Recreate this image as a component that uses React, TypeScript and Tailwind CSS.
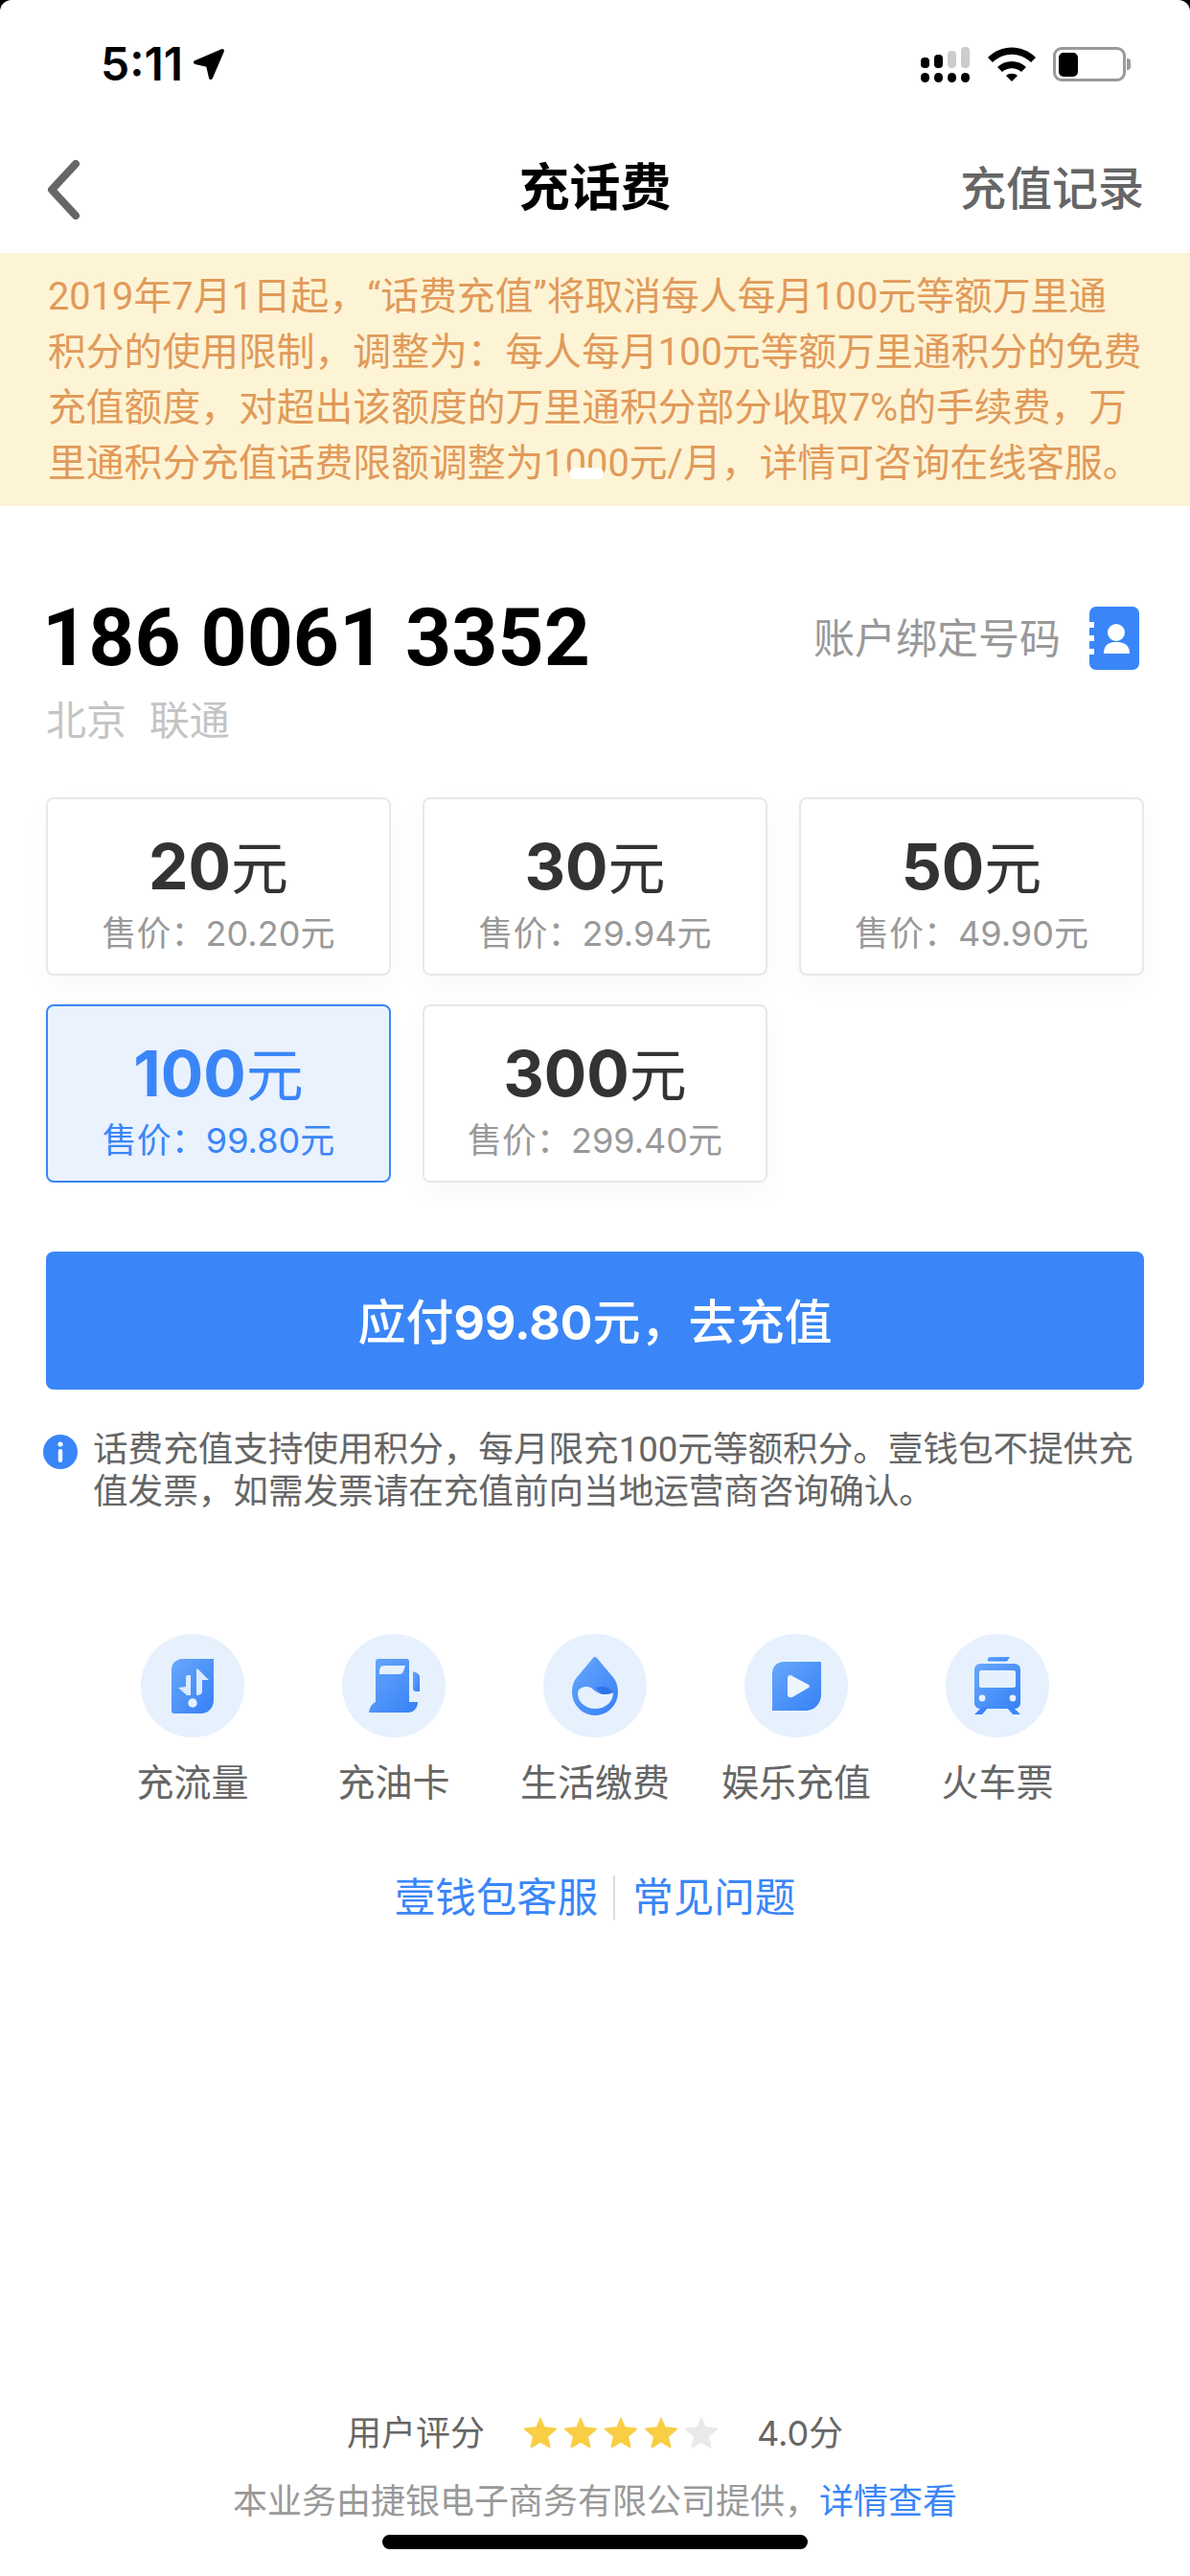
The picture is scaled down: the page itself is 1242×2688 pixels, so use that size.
const CJK = "font-['Inter','Noto_Sans_CJK_SC',sans-serif]";

const PLANS = [
  { face: '20', price: '20.20' },
  { face: '30', price: '29.94' },
  { face: '50', price: '49.90' },
  { face: '100', price: '99.80', active: true },
  { face: '300', price: '299.40' },
];

function IconGradient({ id }: { id: string }) {
  return (
    <defs>
      <linearGradient id={id} x1="0" y1="0" x2="1" y2="1">
        <stop offset="0" stopColor="#68a8fb" />
        <stop offset="1" stopColor="#3580f6" />
      </linearGradient>
    </defs>
  );
}

function SignalIcon() {
  return (
    <svg width="52" height="37" viewBox="0 0 52 37">
      <rect x="0" y="11" width="9" height="11" rx="4" fill="#000" />
      <rect x="14" y="8" width="9" height="14" rx="4" fill="#000" />
      <rect x="28" y="4" width="9" height="18" rx="4" fill="#ccc" />
      <rect x="42" y="0" width="9" height="22" rx="4" fill="#ccc" />
      <rect x="0" y="27" width="9" height="10" rx="4.5" fill="#000" />
      <rect x="14" y="27" width="9" height="10" rx="4.5" fill="#000" />
      <rect x="28" y="27" width="9" height="10" rx="4.5" fill="#000" />
      <rect x="42" y="27" width="9" height="10" rx="4.5" fill="#000" />
    </svg>
  );
}

function WifiIcon() {
  return (
    <svg width="50" height="36" viewBox="0 0 50 36">
      <path d="M0 11 C14 -3 36 -3 50 11 L45 16 C33 5 17 5 5 16 Z" fill="#000" />
      <path d="M10 21 C18 13 32 13 40 21 L35 26 C29 21 21 21 15 26 Z" fill="#000" />
      <path d="M19 30 C22 27 28 27 31 30 L25 36 Z" fill="#000" />
    </svg>
  );
}

function BatteryIcon() {
  return (
    <div className="flex items-center">
      <div className="flex h-[36px] w-[76px] items-center rounded-[9px] border-[3px] border-[#9a9a9a] p-[3px]">
        <div className="h-[25px] w-[20px] rounded-[5px] bg-black" />
      </div>
      <div className="ml-[1px] h-[12px] w-[4px] rounded-r-[3px] bg-[#9a9a9a]" />
    </div>
  );
}

function ContactIcon() {
  return (
    <svg width="52" height="66" viewBox="0 0 52 66">
      <rect x="0" y="0" width="52" height="66" rx="7" fill="#3a86f8" />
      <rect x="0" y="16" width="5" height="6" fill="#fff" />
      <rect x="0" y="30" width="5" height="6" fill="#fff" />
      <rect x="0" y="44" width="5" height="6" fill="#fff" />
      <circle cx="28" cy="27" r="9" fill="#fff" />
      <path d="M15 49 C15 39 21 37 28 37 C35 37 42 39 42 49 Z" fill="#fff" />
    </svg>
  );
}

function InfoIcon() {
  return (
    <svg width="36" height="36" viewBox="0 0 36 36">
      <circle cx="18" cy="18" r="18" fill="#3a86f8" />
      <circle cx="18" cy="10" r="2.6" fill="#fff" />
      <rect x="15.8" y="15" width="4.4" height="14" rx="2.2" fill="#fff" />
    </svg>
  );
}

function FlowIcon() {
  return (
    <svg width="44" height="57" viewBox="0 0 44 57">
      <IconGradient id="flow" />
      <path d="M11 0 H44 V43 C44 51 38 57 31 57 H3 Q0 57 0 54 V11 C0 5 5 0 11 0 Z" fill="url(#flow)" />
      <path d="M20 17 V38 H16 L7 30 L15 29 V19 Q15 17 17 17 Z" fill="#dcebff" />
      <path d="M26 12 Q26 9 28 11 L39 22 L32 22 V34 Q32 38 26 38 Z" fill="#dcebff" />
      <circle cx="22" cy="46" r="4.7" fill="#e6f1fd" />
    </svg>
  );
}

function FuelIcon() {
  return (
    <svg width="53" height="56" viewBox="0 0 53 56">
      <IconGradient id="fuel" />
      <path d="M7 3 Q7 0 10 0 H39 Q42 0 42 3 V45 H51 C51 51 47 56 41 56 H0 C1 50 3 47 7 45 Z" fill="url(#fuel)" />
      <path d="M16 7 H38 L36 13 Q35 16 32 16 H11 V13 Q11 7 16 7 Z" fill="#e6f1fd" />
      <path d="M46 13 Q53 15 53 19 V34 H49 Q46 34 46 31 Z" fill="url(#fuel)" />
    </svg>
  );
}

function DropIcon() {
  return (
    <svg width="48" height="61" viewBox="0 0 48 61">
      <IconGradient id="drop" />
      <path d="M22 1 Q24 -1 26 1 L41 19 C46 24 48 30 48 37 C48 50 37 61 24 61 C11 61 0 50 0 37 C0 30 2 24 7 19 Z" fill="url(#drop)" />
      <path d="M6 38 C6 33 11 31 15 31 C22 31 24 38 32 39 C37 39 41 38 43 37 C43 47 35 54 24 54 C14 54 6 47 6 38 Z" fill="#e6f1fd" />
      <path d="M25 32 C31 30 39 31 43 37 C39 39 35 39 32 39 C29 38 27 35 25 32 Z" fill="#2f74e8" />
    </svg>
  );
}

function PlayIcon() {
  return (
    <svg width="51" height="51" viewBox="0 0 51 51">
      <IconGradient id="play" />
      <path d="M12 0 H51 V34 C51 44 44 51 34 51 H0 V12 C0 5 5 0 12 0 Z" fill="url(#play)" />
      <path d="M16 17 Q16 14 19 14 Q20 14 21 15 L38 24 Q40 26 38 27 L21 37 Q16 38 16 34 Z" fill="#eef5fe" />
    </svg>
  );
}

function TrainIcon() {
  return (
    <svg width="48" height="60" viewBox="0 0 48 60">
      <IconGradient id="train" />
      <path d="M16 0 H37 L34 4.5 H14 Q13 1 16 0 Z" fill="url(#train)" />
      <rect x="0" y="7" width="48" height="47" rx="6" fill="url(#train)" />
      <rect x="5" y="14" width="38" height="18" rx="2" fill="#e6f1fd" />
      <circle cx="8" cy="43" r="3.4" fill="#e6f1fd" />
      <circle cx="40" cy="43" r="3.4" fill="#e6f1fd" />
      <path d="M7 53 H14 L8 60 H0 Z M34 53 H41 L48 60 H40 Z" fill="#3a86f8" />
    </svg>
  );
}

const SERVICES = [
  { label: '充流量', icon: <FlowIcon /> },
  { label: '充油卡', icon: <FuelIcon /> },
  { label: '生活缴费', icon: <DropIcon /> },
  { label: '娱乐充值', icon: <PlayIcon /> },
  { label: '火车票', icon: <TrainIcon /> },
];

function Star({ on }: { on: boolean }) {
  return (
    <svg width="36" height="35" viewBox="0 0 24 23">
      <path
        d="M12 1 L15 8 L22.6 8.8 Q24 9.2 23 10.2 L17.4 15 L19 22 Q19 23 18 22.6 L12 19 L6 22.6 Q5 23 5 22 L6.6 15 L1 10.2 Q0 9.2 1.4 8.8 L9 8 Z"
        fill={on ? '#f9ce45' : '#e9e9e9'}
      />
    </svg>
  );
}

export default function App() {
  return (
    <div className="w-[1242px] bg-black">
      <div className={`relative flex min-h-[2688px] flex-col rounded-t-[12px] bg-white ${CJK}`}>
        {/* status bar */}
        <div className="flex h-[134px] items-center justify-between pl-[105px] pr-[62px]">
          <div className="flex items-center gap-[10px] text-[48px] font-semibold text-black">
            5:11
            <svg width="34" height="34" viewBox="0 0 34 34">
              <path d="M31 3 L3 15 L16 18 L19 31 Z" fill="#000" stroke="#000" strokeWidth="4" strokeLinejoin="round" />
            </svg>
          </div>
          <div className="flex items-center gap-[18px]">
            <SignalIcon />
            <WifiIcon />
            <BatteryIcon />
          </div>
        </div>

        {/* nav */}
        <div className="relative flex h-[130px] items-center justify-center pb-[4px]">
          <svg className="absolute left-[48px] top-[33px]" width="36" height="62" viewBox="0 0 36 62">
            <path d="M31 4 L6 31 L31 58" fill="none" stroke="#666" strokeWidth="8" strokeLinecap="round" strokeLinejoin="round" />
          </svg>
          <span className="text-[53px] font-semibold text-black">充话费</span>
          <span className="absolute right-[48px] text-[48px] font-medium text-[#666]">充值记录</span>
        </div>

        {/* notice */}
        <div className="relative h-[264px] whitespace-nowrap bg-[#fdf4d5] px-[50px] pt-[17px] font-['Roboto','Noto_Sans_CJK_SC',sans-serif] text-[39.8px] leading-[58px] text-[#e19a5a]">
          <p>2019年7月1日起，“话费充值”将取消每人每月100元等额万里通</p>
          <p>积分的使用限制，调整为：每人每月100元等额万里通积分的免费</p>
          <p>充值额度，对超出该额度的万里通积分部分收取7%的手续费，万</p>
          <p>里通积分充值话费限额调整为1000元/月，详情可咨询在线客服。</p>
          <div className="absolute left-[594px] top-[224px] h-[12px] w-[36px] rounded-full bg-white" />
        </div>

        {/* phone */}
        <div className="flex items-center justify-between pl-[44px] pr-[53px] pt-[91px]">
          <span className="font-['Roboto',sans-serif] text-[84px] leading-[94px] font-bold text-black">186 0061 3352</span>
          <div className="flex items-center gap-[30px]">
            <span className="text-[43px] text-[#999]">账户绑定号码</span>
            <ContactIcon />
          </div>
        </div>
        <div className="pl-[48px] pt-[11px] text-[42px] leading-[56px] text-[#c4c4c4]">北京&nbsp;&nbsp;联通</div>

        {/* plans */}
        <div className="grid grid-cols-3 gap-x-[33px] gap-y-[30px] px-[48px] pt-[52px]">
          {PLANS.map((p) => (
            <div
              key={p.face}
              className={`flex h-[186px] flex-col items-center justify-center rounded-[8px] border-2 pt-[12px] ${
                p.active
                  ? 'border-[#3a86f8] bg-[#eaf2fe] text-[#3a86f8]'
                  : 'border-[#e8e8e8] bg-white text-[#333] shadow-[0_10px_30px_rgba(0,0,0,0.03)]'
              }`}
            >
              <div className="text-[66px] leading-[80px]">
                <span className="font-bold">{p.face}</span>
                <span className="text-[60px]">元</span>
              </div>
              <div className={`mt-[3px] text-[36px] leading-[50px] ${p.active ? 'text-[#3a86f8]' : 'text-[#999]'}`}>
                售价：{p.price}元
              </div>
            </div>
          ))}
        </div>

        {/* pay */}
        <div className="px-[48px] pt-[72px]">
          <button className="h-[144px] w-full rounded-[8px] bg-[#3a86f8] pt-[4px] text-[50px] font-medium text-white">
            应付<span className="font-bold">99.80</span>元，去充值
          </button>
        </div>

        {/* tip */}
        <div className="flex gap-[16px] pl-[45px] pr-[48px] pt-[41px]">
          <div className="mt-[6px] shrink-0">
            <InfoIcon />
          </div>
          <p className="font-['Roboto','Noto_Sans_CJK_SC',sans-serif] text-[36.6px] leading-[44px] text-[#666]">
            话费充值支持使用积分，每月限充100元等额积分。壹钱包不提供充值发票，如需发票请在充值前向当地运营商咨询确认。
          </p>
        </div>

        {/* services */}
        <div className="flex justify-center gap-[102px] pt-[126px]">
          {SERVICES.map((s) => (
            <div key={s.label} className="flex w-[108px] flex-col items-center">
              <div className="flex h-[108px] w-[108px] items-center justify-center rounded-full bg-[#e6f1fd]">{s.icon}</div>
              <span className="mt-[22px] whitespace-nowrap text-[39px] leading-[50px] text-[#666]">{s.label}</span>
            </div>
          ))}
        </div>

        {/* links */}
        <div className="flex items-center justify-center pt-[67px] text-[42.5px] leading-[56px] text-[#3a86f8]">
          <span className="pr-[16px]">壹钱包客服</span>
          <span className="h-[46px] w-[2px] bg-[#ddd]" />
          <span className="pl-[18px]">常见问题</span>
        </div>

        {/* rating + provider */}
        <div className="mt-auto flex flex-col items-center pb-[54px]">
          <div className="flex items-center text-[36px] leading-[46px] text-[#666]">
            <span>用户评分</span>
            <div className="ml-[40px] mr-[40px] flex gap-[6px] pb-[4px]">
              <Star on />
              <Star on />
              <Star on />
              <Star on />
              <Star on={false} />
            </div>
            <span>4.0分</span>
          </div>
          <div className="mt-[24px] text-[36px] leading-[48px] text-[#999]">
            本业务由捷银电子商务有限公司提供，<span className="text-[#3a86f8]">详情查看</span>
          </div>
        </div>

        {/* home indicator */}
        <div className="absolute bottom-[28px] left-[399px] h-[15px] w-[444px] rounded-full bg-black" />
      </div>
    </div>
  );
}
